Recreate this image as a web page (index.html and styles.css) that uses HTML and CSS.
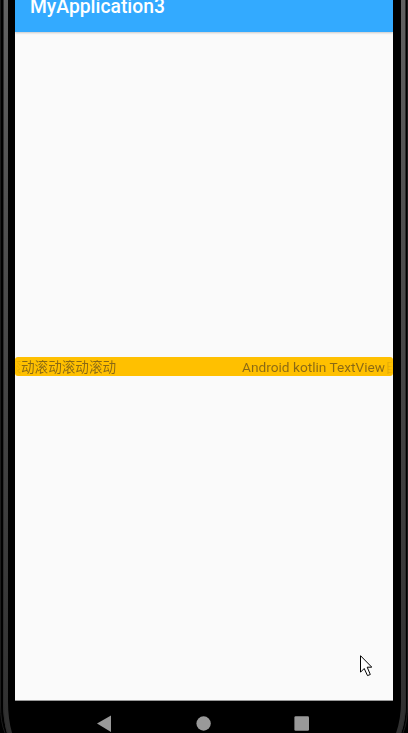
FILE: index.html
```
<!DOCTYPE html>
<html lang="zh-CN">
<head>
<meta charset="utf-8">
<title>MyApplication3</title>
<link rel="stylesheet" href="styles.css">
</head>
<body>
<div class="phone">
  <svg class="bezel" viewBox="0 0 408 733" aria-hidden="true">
    <defs>
      <linearGradient id="shade" x1="0" y1="0" x2="0" y2="733" gradientUnits="userSpaceOnUse">
        <stop offset="0" stop-color="#626262"/>
        <stop offset=".3" stop-color="#505050"/>
        <stop offset=".65" stop-color="#404040"/>
        <stop offset="1" stop-color="#303030"/>
      </linearGradient>
    </defs>
    <g fill="none">
      <path d="M.5 0V706Q.5 722 5 733M407.5 0V706Q407.5 722 403 733" stroke="#1c1c1c"/>
      <path d="M5.5 0V702Q5.5 720 10 735M403.5 0V702Q403.5 720 398 735" stroke="url(#shade)" stroke-width="5"/>
      <path d="M3.5 0V702Q3.5 720 8 735M405.5 0V702Q405.5 720 400 735" stroke="#2c2c2c"/>
    </g>
  </svg>
  <div class="screen">
    <header class="appbar">MyApplication3</header>
    <main class="content">
      <div class="marquee">
        <span class="tail">滚动滚动滚动滚动</span>
        <span class="head">Android kotlin TextView自</span>
      </div>
    </main>
    <nav class="navbar">
      <svg viewBox="0 0 378 33">
        <g fill="#999">
          <path d="M82 22.5L96 14.5V31Z"/>
          <circle cx="188.6" cy="22.5" r="7.2"/>
          <rect x="279.4" y="15.2" width="14.6" height="14.6" rx="1.3"/>
        </g>
      </svg>
    </nav>
  </div>
  <svg class="cursor" viewBox="0 0 12 22" aria-hidden="true">
    <path d="M.5.7V17.2L4.2 13.5L7.5 20.6L10.3 19.5L7.2 12.2H11.8Z" fill="#fff" stroke="#000"/>
  </svg>
</div>
</body>
</html>
```
FILE: styles.css
```
body {
  margin: 0;
  background: #000;
  overflow: hidden;
}

.phone {
  position: relative;
  display: flex;
  justify-content: center;
  width: 408px;
  height: 733px;
  font-family: Roboto, "Noto Sans CJK SC", sans-serif;
}

.bezel {
  position: absolute;
  inset: 0;
  width: 408px;
  height: 733px;
}

.screen {
  position: relative;
  display: flex;
  flex-direction: column;
  width: 378px;
}

.appbar {
  box-sizing: border-box;
  height: 32px;
  padding-left: 15px;
  background: #33aaff;
  color: #fff;
  font-size: 19.3px;
  font-weight: 500;
  line-height: 13px;
  white-space: nowrap;
  box-shadow: 0 1px 2px rgba(0, 0, 0, .2);
  z-index: 1;
}

.content {
  box-sizing: border-box;
  height: 669px;
  padding-top: 325px;
  background: #fafafa;
  border-bottom: 1px solid #999;
}

.marquee {
  display: flex;
  justify-content: space-between;
  box-sizing: border-box;
  height: 19px;
  border-radius: 3px;
  background: #ffc000;
  font-size: 13.6px;
  line-height: 20px;
  white-space: nowrap;
  overflow: hidden;
}

.tail,
.head {
  -webkit-background-clip: text;
  background-clip: text;
  color: transparent;
}

.tail {
  margin-left: -7.6px;
  background-image: linear-gradient(90deg, #ffc000 8px, #e0a705 13px, #8a6914 15px);
}

.head {
  width: 151px;
  overflow: hidden;
  font-size: 13.7px;
  background-image: linear-gradient(90deg, #8a6914 141px, #d9a207 144px, #ffc000 151px);
}

.navbar {
  height: 32px;
  overflow: hidden;
  background: #000;
}

.navbar svg {
  display: block;
  width: 378px;
  height: 33px;
}

.cursor {
  position: absolute;
  left: 360px;
  top: 655px;
  width: 12px;
  height: 22px;
}
```
